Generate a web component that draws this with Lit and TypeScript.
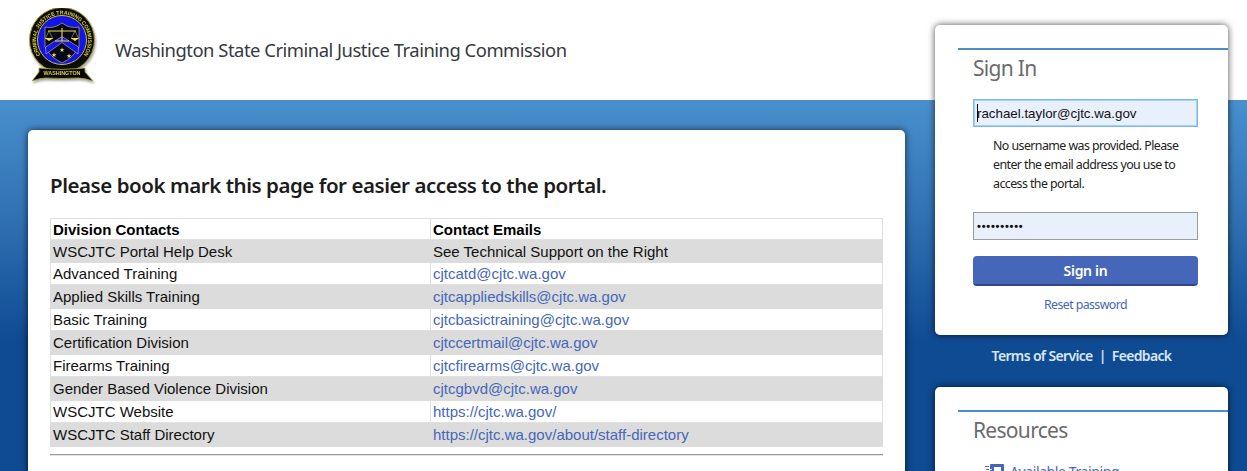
import { LitElement, html, css, svg } from "lit";
import { customElement } from "lit/decorators.js";

const rows: [string, string, boolean, string][] = [
  ["WSCJTC Portal Help Desk", "See Technical Support on the Right", false, "alt first"],
  ["Advanced Training", "cjtcatd@cjtc.wa.gov", true, ""],
  ["Applied Skills Training", "cjtcappliedskills@cjtc.wa.gov", true, "alt"],
  ["Basic Training", "cjtcbasictraining@cjtc.wa.gov", true, ""],
  ["Certification Division", "cjtccertmail@cjtc.wa.gov", true, "alt"],
  ["Firearms Training", "cjtcfirearms@cjtc.wa.gov", true, ""],
  ["Gender Based Violence Division", "cjtcgbvd@cjtc.wa.gov", true, "alt"],
  ["WSCJTC Website", "https://cjtc.wa.gov/", true, ""],
  ["WSCJTC Staff Directory", "https://cjtc.wa.gov/about/staff-directory", true, "alt"],
];

const star = (x: number, y: number) => svg`
  <path transform="translate(${x} ${y}) scale(2.6)" fill="#f2ea5c"
    d="M0-1 .24-.31.95-.31.38.12.59.81 0 .4-.59.81-.38.12-.95-.31-.24-.31Z"/>`;

const logo = svg`
<svg class="logo" viewBox="0 0 70 80" width="70" height="80" aria-hidden="true">
  <defs>
    <path id="arc" d="M12.5 47 A26 26 0 1 1 55.5 47" fill="none"/>
  </defs>
  <circle cx="34" cy="32" r="32.5" fill="#0c0c06" stroke="#a89e2c" stroke-width="1"/>
  <circle cx="34" cy="32" r="24.5" fill="#1414e8" stroke="#c9bd3a" stroke-width="1"/>
  <path d="M17 19 Q26 21 34 15 Q42 21 51 19 L51 39 Q46 49 34 55 Q22 49 17 39Z" fill="#07071c" stroke="#d8ce5a" stroke-width="0.6"/>
  <path d="M18 46 L34 34.5 L50 46 L50.5 39 L34 28.5 L17.5 39Z" fill="#1616e8" stroke="#e4e0a0" stroke-width="0.5"/>
  <path d="M34 20V33M20 23H48M27 33H41" stroke="#ece23a" stroke-width="1.1" fill="none"/>
  <path d="M21 23l-3.5 7M21 23l3.5 7M47 23l-3.5 7M47 23l3.5 7" stroke="#ece23a" stroke-width="0.5" fill="none"/>
  <path d="M16.5 30h9l-4.500 3zM42.500 30h9l-4.500 3z" fill="#ece23a"/>
  ${star(34, 42)}${star(26, 47)}${star(41, 48)}
  <text font-family="Liberation Sans" font-size="5.400" font-weight="700" fill="#d9ce45"><textPath href="#arc" textLength="112" lengthAdjust="spacingAndGlyphs">CRIMINAL JUSTICE TRAINING COMMISSION</textPath></text>
  <path d="M4 73 L11 64 L11 60 Q34 63 57 60 L57 64 L65 73 Q56 70 50 70 Q34 71 18 70 Q12 70 4 73Z" fill="#050505" stroke="#b4aa2c" stroke-width="0.8"/>
  <text x="34" y="67.200" text-anchor="middle" font-family="Liberation Sans" font-size="5.400" font-weight="700" fill="#d9ce45">WASHINGTON</text>
</svg>`;

@customElement("app-root")
export class AppRoot extends LitElement {
  static styles = css`
    :host {
      display: block;
      height: 471px;
      overflow: hidden;
      font-family: "Noto Sans", "Open Sans", sans-serif;
      background: linear-gradient(to bottom, #fff 0, #fff 100px, #4a90cd 100px, #2f70b2 220px, #0f4b93 340px, #0f4b93 100%);
    }
    .page {
      display: grid;
      grid-template-columns: 877px 293px;
      column-gap: 30px;
      padding-left: 28px;
      align-items: start;
    }
    .brand {
      height: 100px;
      display: flex;
      align-items: flex-start;
      gap: 17px;
    }
    .logo {
      margin-top: 8px;
      flex: none;
      filter: blur(0.3px) drop-shadow(1px 2px 1px rgba(0, 0, 0, 0.35));
    }
    .brand-name {
      margin: 36px 0 0;
      font-size: 18.4px;
      line-height: 27px;
      font-weight: 400;
      color: #36393f;
      letter-spacing: -0.48px;
      white-space: nowrap;
    }
    .card {
      background: #fff;
      border-radius: 5px;
      box-shadow: 0 0 7px rgba(0, 0, 0, 0.7);
    }
    .main {
      margin-top: 30px;
      height: 400px;
      padding: 41px 22px 0;
      box-sizing: border-box;
    }
    h1 {
      margin: 0 0 19px;
      font-size: 20.5px;
      line-height: 28px;
      font-weight: 600;
      color: #1c1c1c;
      letter-spacing: -0.45px;
      white-space: nowrap;
    }
    table {
      width: 833px;
      border-collapse: collapse;
      table-layout: fixed;
      font-family: "Liberation Sans", Arial, sans-serif;
      font-size: 15px;
      color: #111;
    }
    th, td {
      border: 1px solid #e0e0e0;
      padding: 0 2px;
      text-align: left;
      line-height: 17px;
      white-space: nowrap;
    }
    th { height: 20px; font-weight: 700; color: #000; }
    td { height: 21px; }
    tr.alt td { height: 23px; background: #dcdcdc; border-color: #dcdcdc; }
    tr.first td { height: 22px; }
    .col1 { width: 380px; }
    a { color: #4667b9; text-decoration: none; }
    hr {
      margin: 7px 0 0;
      border: 0;
      border-top: 1px solid #9a9a9a;
      border-bottom: 1px solid #e4e4e4;
    }
    .side { padding-top: 25px; }
    .signin { height: 310px; box-sizing: border-box; padding-top: 23px; }
    .rule {
      margin-left: 23px;
      border-top: 2px solid #4a8fcb;
    }
    h2 {
      margin: 0;
      padding-left: 38px;
      font-size: 21px;
      line-height: 36px;
      font-weight: 400;
      color: #6b6b6b;
      letter-spacing: -0.7px;
    }
    .form {
      padding: 13px 30px 0 38px;
      display: flex;
      flex-direction: column;
    }
    .field {
      height: 28px;
      box-sizing: border-box;
      background: #e8f0fc;
      border: 1px solid #9a9a9a;
      padding-left: 3px;
      font-family: "Liberation Sans", Arial, sans-serif;
      font-size: 13.33px;
      line-height: 26px;
      color: #111;
      display: flex;
      align-items: center;
    }
    .field.focus {
      border: 1px solid #7db7ec;
      box-shadow: 0 0 0 1px #a8d0f4 inset;
      padding-top: 2px;
    }
    .caret { width: 1px; height: 18px; background: #000; margin: -2px -1px 0 0; flex: none; }
    .dots { font-size: 11px; letter-spacing: 0.8px; font-weight: 700; }
    .hint {
      margin: 9px 0 19px;
      padding-left: 20px;
      font-size: 12.4px;
      line-height: 19px;
      color: #222;
      letter-spacing: -0.57px;
    }
    .btn {
      margin-top: 16px;
      height: 30px;
      box-sizing: border-box;
      border-radius: 4px;
      background: #4667b9;
      border-bottom: 2px solid #2f4684;
      color: #fff;
      text-align: center;
      font-size: 14px;
      font-weight: 600;
      line-height: 30px;
      letter-spacing: -0.3px;
    }
    .reset {
      margin-top: 10px;
      text-align: center;
      font-size: 12.4px;
      line-height: 18px;
      letter-spacing: -0.6px;
    }
    .links {
      height: 52px;
      box-sizing: border-box;
      padding-top: 11px;
      display: flex;
      justify-content: center;
      align-items: flex-start;
      gap: 6px;
      color: #d9e6f5;
      font-size: 14px;
      line-height: 20px;
      font-weight: 600;
      letter-spacing: -0.65px;
    }
    .links a { color: #d9e6f5; }
    .resources { height: 200px; padding-top: 23px; box-sizing: border-box; }
    .item {
      margin: 14px 0 0 50px;
      display: flex;
      align-items: center;
      gap: 6px;
      font-size: 14px;
      line-height: 20px;
      letter-spacing: -0.4px;
    }
    .item svg { flex: none; }
  `;

  render() {
    return html`
      <div class="page">
        <div>
          <header class="brand">
            ${logo}
            <p class="brand-name">Washington State Criminal Justice Training Commission</p>
          </header>
          <main class="card main">
            <h1>Please book mark this page for easier access to the portal.</h1>
            <table>
              <colgroup><col class="col1" /><col /></colgroup>
              <tr><th>Division Contacts</th><th>Contact Emails</th></tr>
              ${rows.map(
                ([name, value, link, cls]) => html`
                  <tr class=${cls}>
                    <td>${name}</td>
                    <td>${link ? html`<a href="#">${value}</a>` : value}</td>
                  </tr>
                `
              )}
            </table>
            <hr />
          </main>
        </div>
        <aside class="side">
          <section class="card signin">
            <div class="rule"></div>
            <h2 class="title">Sign In</h2>
            <div class="form">
              <div class="field focus"><span class="caret"></span>rachael.taylor@cjtc.wa.gov</div>
              <p class="hint">No username was provided. Please enter the email address you use to access the portal.</p>
              <div class="field"><span class="dots">••••••••••</span></div>
              <div class="btn">Sign in</div>
              <a class="reset" href="#">Reset password</a>
            </div>
          </section>
          <nav class="links"><a href="#">Terms of Service</a><span>|</span><a href="#">Feedback</a></nav>
          <section class="card resources">
            <div class="rule"></div>
            <h2>Resources</h2>
            <a class="item" href="#">
              <svg width="19" height="16" viewBox="0 0 19 16" fill="#4667b9" aria-hidden="true">
                <path d="M5 1a1 1 0 0 1 1-1h12a1 1 0 0 1 1 1v12a1 1 0 0 1-1 1H6a1 1 0 0 1-1-1V9h3V8H5V6h2V5H5zM9 3v4h7V3zM0 2h4v1H0zM1 5h3v1H1z"/>
              </svg>
              Available Training
            </a>
          </section>
        </aside>
      </div>
    `;
  }
}
